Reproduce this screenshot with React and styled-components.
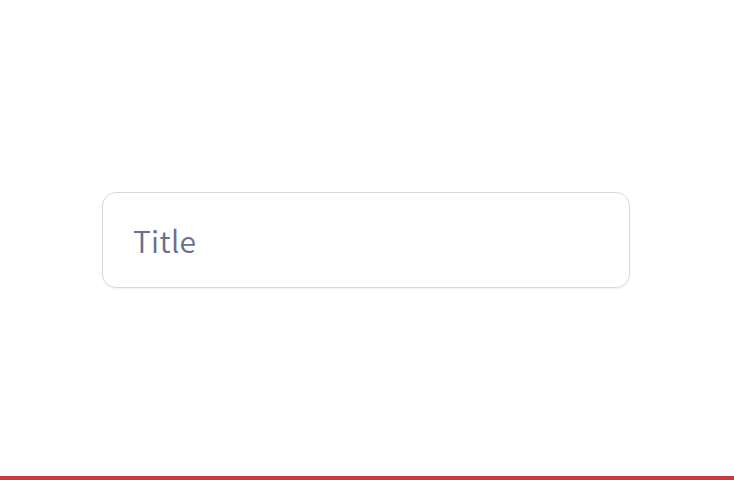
import React from "react";
import styled, { createGlobalStyle } from "styled-components";

const Global = createGlobalStyle`
  html, body { margin: 0; padding: 0; background: #ffffff; }
  #root { min-height: 100vh; }
`;

const Page = styled.div`
  height: 100vh;
  box-sizing: border-box;
  display: flex;
  flex-direction: column;
`;

const Stage = styled.main`
  flex: 1;
  display: flex;
  align-items: center;
  justify-content: center;
  padding-right: 2px;
`;

const Field = styled.div`
  width: 528px;
  height: 96px;
  box-sizing: border-box;
  margin-bottom: -4px;
  border: 1px solid #d8d8e0;
  border-radius: 14px;
  box-shadow: 0 1px 2px rgba(20, 20, 40, 0.06);
  display: flex;
  align-items: center;
  padding: 0 30px;
  font-family: "Noto Sans CJK JP", "Noto Sans", sans-serif;
  font-size: 30px;
  font-weight: 350;
  letter-spacing: 0.3px;
  color: #6a6f8e;
`;

const Footer = styled.div`
  height: 4px;
  background: #c93a3a;
`;

export default function App() {
  return (
    <Page>
      <Global />
      <Stage>
        <Field>Title</Field>
      </Stage>
      <Footer />
    </Page>
  );
}
